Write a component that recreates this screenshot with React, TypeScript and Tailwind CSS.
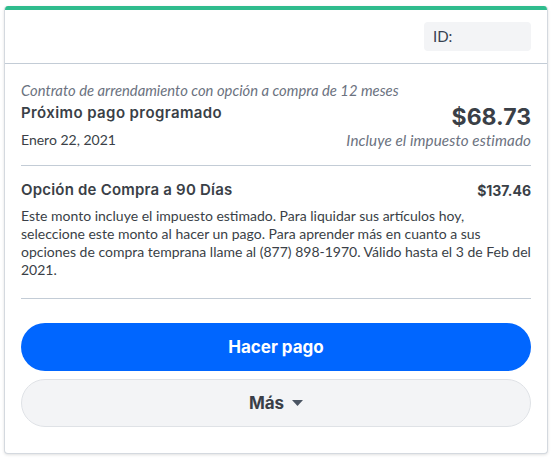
export default function App() {
  return (
    <div className="min-h-screen bg-white px-1 pt-1.5 font-['Lato',sans-serif]" style={{ width: 557 }}>
      <div className="w-[544px] overflow-hidden rounded-[4px] border border-[#d4d9df] border-t-0 bg-white shadow-[0_1px_3px_rgba(0,0,0,0.12)]">
        <div className="h-1 bg-[#2fbc8d]" />
        <div className="flex justify-end px-4 pt-[12px] pb-[12px]">
          <div className="flex h-[29px] w-[107px] items-center rounded-[4px] bg-[#f3f4f6] px-[9px] text-[15px] text-[#374151]">
            ID:
          </div>
        </div>
        <div className="border-t border-[#c3ccd6] px-4">
          <div className="pt-[17px] pb-[13px]">
            <p className="text-[14.8px] italic leading-[18px] text-[#6b7280]">
              Contrato de arrendamiento con opción a compra de 12 meses
            </p>
            <div className="flex items-start justify-between">
              <div>
                <p className="mt-[3px] font-['Inter',sans-serif] text-[15px] font-semibold tracking-[0.4px] text-[#3a3f47]">
                  Próximo pago programado
                </p>
                <p className="mt-[4px] text-[14px] text-[#3a3f47]">Enero 22, 2021</p>
              </div>
              <div className="flex flex-col items-end">
                <p className="mt-[4px] font-['Inter',sans-serif] text-[23px] leading-7 font-bold text-[#3a3f47]">$68.73</p>
                <p className="-mt-[2px] text-[15.2px] italic tracking-[0.1px] text-[#6b7280]">Incluye el impuesto estimado</p>
              </div>
            </div>
          </div>
          <div className="border-t border-[#c3ccd6] pt-[13px] pb-[19px]">
            <div className="flex items-center justify-between">
              <p className="font-['Inter',sans-serif] text-[15px] font-semibold tracking-[0.2px] text-[#3a3f47]">
                Opción de Compra a 90 Días
              </p>
              <p className="font-['Inter',sans-serif] text-[14px] font-bold text-[#3a3f47]">$137.46</p>
            </div>
            <p className="mt-[6px] text-[14px] leading-[18px] text-[#3a3f47]">
              Este monto incluye el impuesto estimado. Para liquidar sus artículos hoy, seleccione este monto al hacer
              un pago. Para aprender más en cuanto a sus opciones de compra temprana llame al (877) 898-1970. Válido
              hasta el 3 de Feb del 2021.
            </p>
          </div>
          <div className="flex flex-col gap-2 border-t border-[#c3ccd6] pt-6 pb-[26px]">
            <button className="h-12 w-full rounded-full bg-[#0066ff] font-['Inter',sans-serif] text-[17px] font-bold text-white">
              Hacer pago
            </button>
            <button className="flex h-12 w-full items-center justify-center gap-2 rounded-full border border-[#dfe2e6] bg-[#f3f4f6] font-['Inter',sans-serif] text-[17px] font-bold text-[#3a3f47]">
              Más
              <svg width="11" height="6" viewBox="0 0 11 6">
                <path d="M0 0h11L5.5 6z" fill="#4b5563" />
              </svg>
            </button>
          </div>
        </div>
      </div>
    </div>
  );
}
